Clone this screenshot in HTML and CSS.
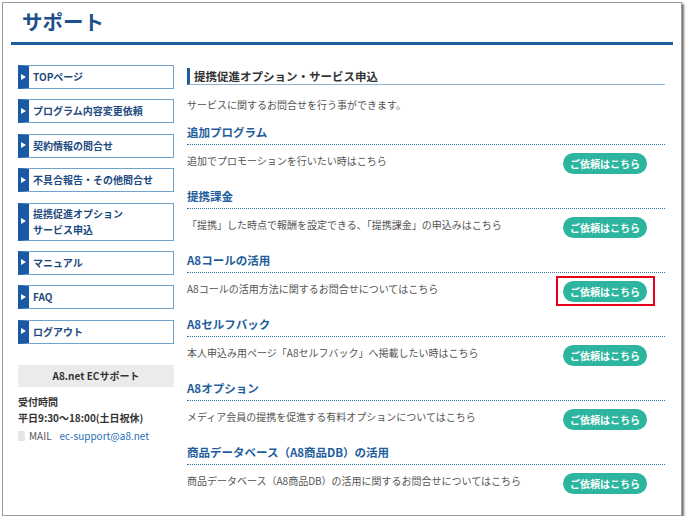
FILE: index.html
```html
<!DOCTYPE html>
<html lang="ja">
<head>
<meta charset="utf-8">
<title>サポート</title>
<link rel="stylesheet" href="styles.css">
</head>
<body>
<div class="frame">
  <header class="page-head">
    <h1 class="page-title">サポート</h1>
  </header>
  <div class="layout">
    <aside class="sidebar">
      <nav class="menu">
        <a class="menu-item" href="#">TOPページ</a>
        <a class="menu-item" href="#">プログラム内容変更依頼</a>
        <a class="menu-item" href="#">契約情報の問合せ</a>
        <a class="menu-item" href="#">不具合報告・その他問合せ</a>
        <a class="menu-item tall" href="#">提携促進オプション<br>サービス申込</a>
        <a class="menu-item" href="#">マニュアル</a>
        <a class="menu-item" href="#">FAQ</a>
        <a class="menu-item" href="#">ログアウト</a>
      </nav>
      <div class="support-box">A8.net ECサポート</div>
      <p class="support-line strong">受付時間</p>
      <p class="support-line strong">平日9:30～18:00(土日祝休)</p>
      <p class="support-line mail"><span class="mail-icon"></span>MAIL<a class="mail-link" href="#">ec-support@a8.net</a></p>
    </aside>
    <main class="main">
      <h2 class="main-title">提携促進オプション・サービス申込</h2>
      <p class="intro">サービスに関するお問合せを行う事ができます。</p>

      <section class="service">
        <h3 class="service-title">追加プログラム</h3>
        <div class="service-row">
          <p class="service-text">追加でプロモーションを行いたい時はこちら</p>
          <a class="btn" href="#">ご依頼はこちら</a>
        </div>
      </section>

      <section class="service">
        <h3 class="service-title">提携課金</h3>
        <div class="service-row">
          <p class="service-text">「提携」した時点で報酬を設定できる、「提携課金」の申込みはこちら</p>
          <a class="btn" href="#">ご依頼はこちら</a>
        </div>
      </section>

      <section class="service">
        <h3 class="service-title">A8コールの活用</h3>
        <div class="service-row">
          <p class="service-text">A8コールの活用方法に関するお問合せについてはこちら</p>
          <a class="btn highlight" href="#">ご依頼はこちら</a>
        </div>
      </section>

      <section class="service">
        <h3 class="service-title">A8セルフバック</h3>
        <div class="service-row">
          <p class="service-text">本人申込み用ページ「A8セルフバック」へ掲載したい時はこちら</p>
          <a class="btn" href="#">ご依頼はこちら</a>
        </div>
      </section>

      <section class="service">
        <h3 class="service-title">A8オプション</h3>
        <div class="service-row">
          <p class="service-text">メディア会員の提携を促進する有料オプションについてはこちら</p>
          <a class="btn" href="#">ご依頼はこちら</a>
        </div>
      </section>

      <section class="service">
        <h3 class="service-title">商品データベース（A8商品DB）の活用</h3>
        <div class="service-row">
          <p class="service-text">商品データベース（A8商品DB）の活用に関するお問合せについてはこちら</p>
          <a class="btn" href="#">ご依頼はこちら</a>
        </div>
      </section>
    </main>
  </div>
</div>
</body>
</html>
```

FILE: styles.css
```css
* {
  box-sizing: border-box;
}

html, body {
  margin: 0;
  padding: 0;
  background: #ffffff;
}

body {
  font-family: "Noto Sans CJK JP", "Noto Sans", sans-serif;
  color: #555555;
  font-size: 10px;
}

p, h1, h2, h3 {
  margin: 0;
}

a {
  text-decoration: none;
}

.frame {
  margin: 2px 0 0 2px;
  width: 680px;
  height: 514px;
  border: 1px solid #9c9c9c;
  box-shadow: 2px 2px 2px rgba(0, 0, 0, 0.55);
  background: #ffffff;
}

.page-head {
  margin: 0 8px;
  padding: 3px 0 6px 11px;
  border-bottom: 3px solid #1f5e9c;
}

.page-title {
  font-size: 20.5px;
  line-height: 30px;
  font-weight: 700;
  color: #1c4f8b;
}

.layout {
  display: flex;
  gap: 13px;
  padding-left: 15px;
}

.sidebar {
  width: 156px;
  padding-top: 20px;
  flex: none;
}

.menu {
  display: flex;
  flex-direction: column;
  gap: 10.4px;
}

.menu-item {
  position: relative;
  display: flex;
  align-items: center;
  height: 24px;
  padding-left: 4px;
  border: 1px solid #6fa3cf;
  border-left: 11px solid #1a5aa5;
  font-size: 10px;
  line-height: 16px;
  font-weight: 700;
  color: #1d4a80;
}

.menu-item::before {
  content: "";
  position: absolute;
  left: -8px;
  top: 50%;
  margin-top: -3.5px;
  border-left: 5px solid #ffffff;
  border-top: 3.5px solid transparent;
  border-bottom: 3.5px solid transparent;
}

.menu-item.tall {
  height: 38px;
}

.support-box {
  margin-top: 21px;
  height: 22px;
  background: #ebebeb;
  text-align: center;
  font-size: 10px;
  line-height: 22px;
  font-weight: 700;
  color: #333333;
}

.support-line {
  font-size: 10px;
  line-height: 16px;
  color: #333333;
}

.support-line.strong {
  font-weight: 700;
}

.support-box + .support-line {
  margin-top: 7px;
}

.support-line.mail {
  display: flex;
  align-items: center;
  margin-top: 2px;
  color: #555555;
}

.mail-icon {
  width: 7px;
  height: 10px;
  background: #e6e6e6;
  margin-right: 4px;
}

.mail-link {
  margin-left: 8px;
  color: #2a6fb5;
}

.main {
  width: 478px;
  padding-top: 23px;
}

.main-title {
  border-left: 3px solid #1f5e9c;
  border-bottom: 1px solid #8fb4d4;
  padding-left: 4px;
  font-size: 11.5px;
  line-height: 16px;
  font-weight: 700;
  color: #333333;
}

.intro {
  margin-top: 12px;
  font-size: 10px;
  line-height: 16px;
  color: #555555;
}

.service {
  margin-top: 10px;
}

.service + .service {
  margin-top: 13px;
}

.service-title {
  font-size: 11.5px;
  line-height: 18px;
  font-weight: 700;
  color: #1f5e9c;
  padding-bottom: 3px;
  border-bottom: 1px dotted #2f7bb0;
}

.service-row {
  display: flex;
  justify-content: space-between;
  align-items: flex-start;
  padding-top: 8px;
  padding-right: 18px;
}

.service-text {
  font-size: 10px;
  line-height: 16px;
  color: #555555;
}

.btn {
  position: relative;
  flex: none;
  display: block;
  width: 84px;
  height: 21px;
  border-radius: 11px;
  background: #2db59f;
  color: #ffffff;
  font-size: 10px;
  font-weight: 700;
  line-height: 21px;
  text-align: center;
}

.btn.highlight::after {
  content: "";
  position: absolute;
  top: -5px;
  right: -8px;
  bottom: -4px;
  left: -7px;
  border: 2px solid #e3001b;
}
```
